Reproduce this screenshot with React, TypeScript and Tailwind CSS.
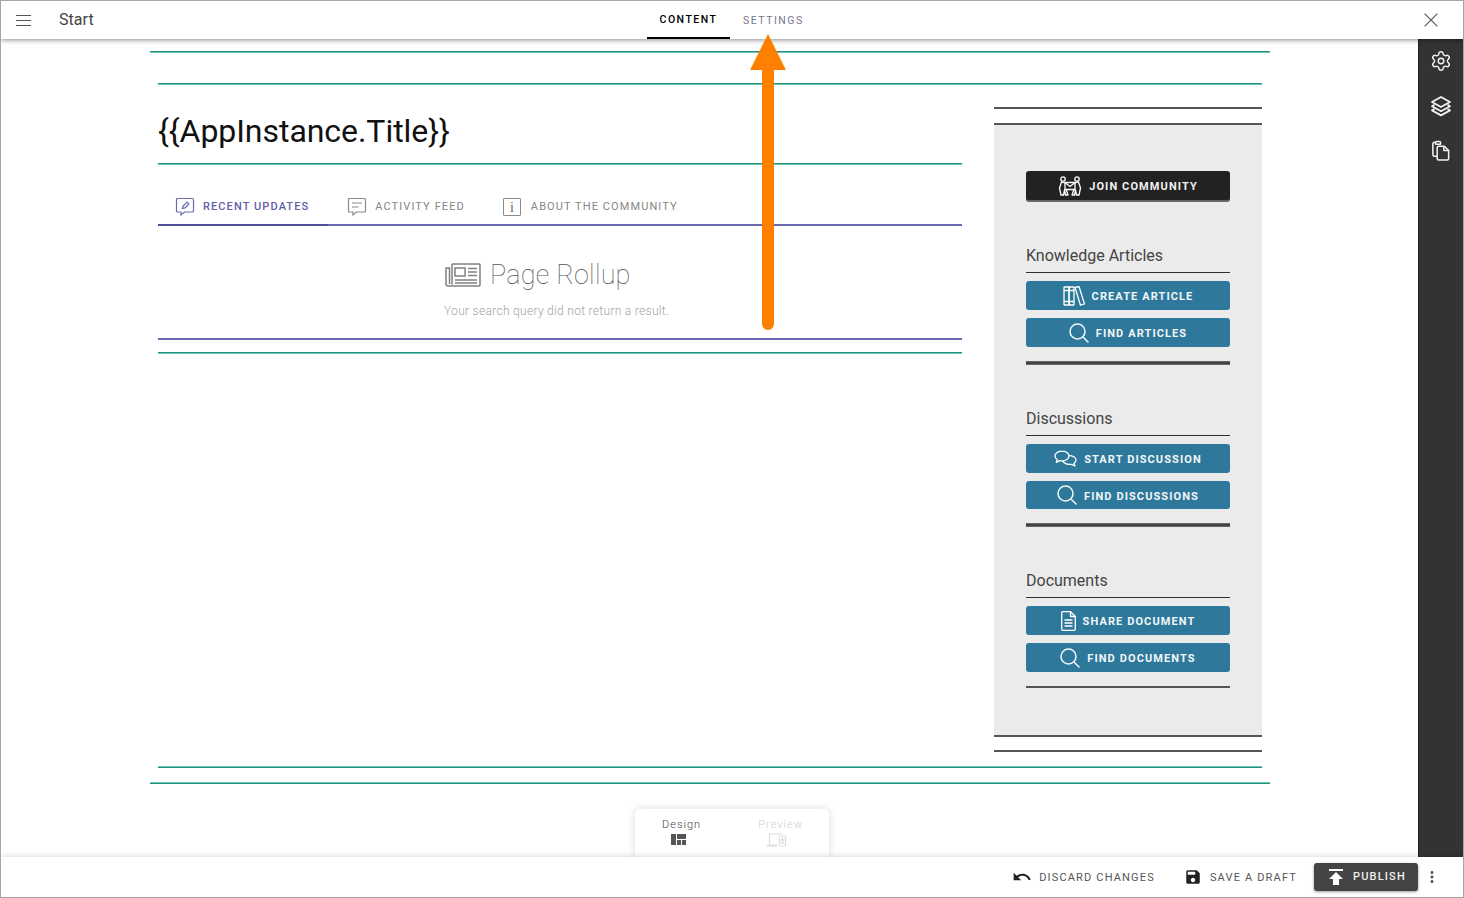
import { Settings, X } from "lucide-react";
import { MdMoreVert, MdPublish, MdSave, MdUndo } from "react-icons/md";
import type { ReactNode } from "react";

function GreenRule({ flip = false }: { flip?: boolean }) {
  return (
    <div
      className={
        flip
          ? "h-[2px] border-t border-b border-t-[#6cc4b1] border-b-[#1f917c]"
          : "h-[2px] border-t border-b border-t-[#1f917c] border-b-[#6cc4b1]"
      }
    />
  );
}

function BubbleEdit({ color }: { color: string }) {
  return (
    <svg width="20" height="20" viewBox="0 0 20 20" fill="none" stroke={color} strokeWidth="1.2">
      <path d="M2.500 1.500h15a1 1 0 0 1 1 1v11.500a1 1 0 0 1-1 1H9.500l-3.500 3v-3H2.500a1 1 0 0 1-1-1V2.500a1 1 0 0 1 1-1z" />
      <path d="M7.500 11.500l.6-2.400 4-4 1.800 1.800-4 4z" />
    </svg>
  );
}

function BubbleText({ color }: { color: string }) {
  return (
    <svg width="20" height="20" viewBox="0 0 20 20" fill="none" stroke={color} strokeWidth="1.2">
      <path d="M2.500 1.500h15a1 1 0 0 1 1 1v11.500a1 1 0 0 1-1 1H9.500l-3.500 3v-3H2.500a1 1 0 0 1-1-1V2.500a1 1 0 0 1 1-1z" />
      <path d="M5 6h10M5 10h6.500" />
    </svg>
  );
}

function NewsIcon() {
  return (
    <svg width="36" height="24" viewBox="0 0 36 24" fill="none" stroke="#808080" strokeWidth="1.5">
      <path d="M7 1h27a1 1 0 0 1 1 1v20a1 1 0 0 1-1 1H3a2 2 0 0 1-2-2V5h3.500v16" />
      <path d="M7 1v20.500" />
      <rect x="10" y="5" width="10" height="8" />
      <path d="M23 5.500h9M23 9h9M23 12.500h9M10 17h22M10 20h22" />
    </svg>
  );
}

function LayersIcon() {
  return (
    <svg width="22" height="22" viewBox="0 0 22 22" fill="none" stroke="#f2f2f2" strokeWidth="1.8" strokeLinejoin="round">
      <path d="M11 2l9 5-9 5-9-5z" />
      <path d="M4.500 9.800L2 11.200l9 5 9-5-2.500-1.400" />
      <path d="M4.500 14L2 15.400l9 5 9-5L17.500 14" />
    </svg>
  );
}

function PagesIcon() {
  return (
    <svg width="20" height="21" viewBox="0 0 20 22" fill="none" stroke="#f2f2f2" strokeWidth="1.6" strokeLinejoin="round">
      <path d="M6 17H3a1.500 1.500 0 0 1-1.500-1.500V4A1.500 1.500 0 0 1 3 2.500h1.500" />
      <path d="M4.500 4.500V2.500a1 1 0 0 1 1-1h3a1 1 0 0 1 1 1v2z" />
      <path d="M7.500 6.500h6l4.500 4.500v8.500a1.500 1.500 0 0 1-1.500 1.500H7.500A1.500 1.500 0 0 1 6 19.500V8a1.500 1.500 0 0 1 1.500-1.500z" />
      <path d="M13 6.500V11h5" />
    </svg>
  );
}

function JoinIcon() {
  return (
    <svg width="24" height="20" viewBox="0 0 24 20" fill="none" stroke="#fff" strokeWidth="1.300" strokeLinejoin="round">
      <circle cx="5" cy="3" r="2.200" />
      <circle cx="19" cy="3" r="2.200" />
      <rect x="7" y="6.500" width="10" height="7" />
      <path d="M7 6.500l5 4 5-4" />
      <path d="M7 7L3.500 6 1.500 12 3 19h2.500l1-5 1 5H10L8 13" />
      <path d="M17 7l3.500-1 2 6L21 19h-2.500l-1-5-1 5H14l2-6" />
    </svg>
  );
}

function BooksIcon() {
  return (
    <svg width="22" height="20" viewBox="0 0 22 20" fill="none" stroke="#fff" strokeWidth="1.300" strokeLinejoin="round">
      <rect x="1" y="1" width="5" height="18" rx="0.500" />
      <rect x="6" y="1" width="5" height="18" rx="0.500" />
      <path d="M1 4.500h10M1 15.500h10" />
      <path d="M12 1.500l4-1 5.500 17.500-4 1.200z" />
    </svg>
  );
}

function TalkIcon() {
  return (
    <svg width="23" height="17" viewBox="0 0 23 17" fill="none" stroke="#fff" strokeWidth="1.300" strokeLinejoin="round">
      <path d="M8 1C4.200 1 1 3.200 1 6c0 1.500.9 2.800 2.300 3.700L2.300 12.300l3.400-1.600c.7.200 1.500.3 2.300.3 3.800 0 7-2.200 7-5s-3.200-5-7-5z" />
      <path d="M15 5.500c3.600.2 7 1.900 7 4.500 0 1.400-.8 2.500-2 3.300l1 2.700-3.600-1.700c-3.400.6-7.400-.5-8.400-3" />
    </svg>
  );
}

function DocIcon() {
  return (
    <svg width="15" height="20" viewBox="0 0 15 20" fill="none" stroke="#fff" strokeWidth="1.300" strokeLinejoin="round">
      <path d="M2 .700h7.500l4.800 4.800V18a1.300 1.300 0 0 1-1.300 1.300H2A1.300 1.300 0 0 1 .700 18V2A1.300 1.300 0 0 1 2 .700z" />
      <path d="M9.500.700v4.800h4.800" />
      <path d="M3.500 9h8M3.500 12h8M3.500 15h8" />
    </svg>
  );
}

function SearchGlyph() {
  return (
    <svg width="20" height="20" viewBox="0 0 20 20" fill="none" stroke="#f2f6f8" strokeWidth="1.500">
      <circle cx="8.500" cy="8.500" r="7.500" />
      <path d="M14 14l5.500 5.500" />
    </svg>
  );
}

function LayoutGlyph() {
  return (
    <svg className="mr-[7px]" width="15" height="11" viewBox="0 0 15 11" fill="#555555">
      <rect x="0" y="0" width="5" height="11" />
      <rect x="6" y="0" width="9" height="5" />
      <rect x="6" y="6" width="4" height="5" />
      <rect x="11" y="6" width="4" height="5" />
    </svg>
  );
}

function DevicesIcon() {
  return (
    <svg className="mr-[8px]" width="20" height="14" viewBox="0 0 20 14" fill="none" stroke="#dcdcdc" strokeWidth="1.200">
      <path d="M2.500 11V1h12" />
      <path d="M0 12.500h10" strokeWidth="2" />
      <rect x="12.500" y="3" width="6" height="10" rx="1" />
      <rect x="14.500" y="5" width="2" height="6" fill="#dcdcdc" stroke="none" />
    </svg>
  );
}

function ActionButton({ icon, label, height = "h-[29px]" }: { icon: ReactNode; label: string; height?: string }) {
  return (
    <div className={`${height} flex items-center justify-center gap-[7px] rounded-[3px] bg-[#2e799b] text-[11px] font-bold tracking-[1.100px] text-[#f2f6f8]`}>
      {icon}
      <span className="pt-[4px]">{label}</span>
    </div>
  );
}

function SideSection({ title, ruleClass, children }: { title: string; ruleClass: string; children: ReactNode }) {
  return (
    <div className="mt-[41px]">
      <h3 className="h-[29px] pt-[1px] text-[16px] leading-[24px] text-[#444444]">{title}</h3>
      <div className="h-px bg-[#2c2f33]" />
      <div className="mt-[8px] flex flex-col gap-[8px]">{children}</div>
      <div className={ruleClass} />
    </div>
  );
}

export default function App() {
  return (
    <div className="relative flex h-[898px] w-[1464px] flex-col overflow-hidden border border-[#a6a6a6] bg-white font-['Roboto',sans-serif]">
      <header className="relative z-10 flex h-[38px] shrink-0 items-stretch bg-white shadow-[0_1px_5px_rgba(0,0,0,0.45)]">
        <div className="flex w-[646px] items-center pl-[15px]">
          <div className="flex w-[15px] flex-col gap-[4px]">
            <span className="h-px bg-[#555555]" />
            <span className="h-px bg-[#555555]" />
            <span className="h-px bg-[#555555]" />
          </div>
          <span className="ml-[28px] text-[16px] tracking-[0.050px] text-[#444444]">Start</span>
        </div>
        <div className="flex w-[83px] items-center justify-center border-b-2 border-black pt-[2px] text-[10.500px] font-medium tracking-[1.500px] text-black">
          CONTENT
        </div>
        <div className="flex items-center pl-[13px] pt-[1px] text-[10.500px] tracking-[1.500px] text-[#77778c]">SETTINGS</div>
        <div className="ml-auto flex items-center pr-[20px]">
          <X size={24} strokeWidth={1.1} color="#666666" />
        </div>
      </header>

      <div className="relative flex min-h-0 flex-1">
        <main className="relative min-w-0 flex-1 pl-[149px] pt-[12px]">
          <div className="w-[1120px]">
            <GreenRule />
            <div className="mt-[30px] px-[8px]">
              <GreenRule />
              <div className="flex justify-between">
                <div className="w-[804px]">
                  <div className="flex h-[78px] items-center pt-[14px] text-[32px] leading-[40px] tracking-[-0.050px] text-[#111111]">{"{{AppInstance.Title}}"}</div>
                  <GreenRule />
                  <nav className="flex h-[61px] items-stretch border-b-2 border-[#6a6aae] pt-[25px] text-[11px] tracking-[1.100px]">
                    <div className="-mb-[2px] flex items-center gap-[8px] border-b-2 border-[#4f5192] pl-[17px] pr-[19px] font-medium text-[#5f60a8]">
                      <BubbleEdit color="#6a6bb0" />
                      <span>RECENT UPDATES</span>
                    </div>
                    <div className="flex items-center gap-[8px] pl-[19px] pr-[19px] text-[#858585]">
                      <BubbleText color="#8a8a8a" />
                      <span>ACTIVITY FEED</span>
                    </div>
                    <div className="flex items-center gap-[10px] pl-[19px] text-[#858585]">
                      <div className="flex h-[18px] w-[18px] items-center justify-center rounded-[1px] border border-[#8a8a8a] font-['Liberation_Serif',serif] text-[14px] tracking-normal text-[#666666]">
                        i
                      </div>
                      <span>ABOUT THE COMMUNITY</span>
                    </div>
                  </nav>
                  <div className="h-[112px] pl-[287px] pt-[31px]">
                    <div className="flex h-[36px] items-center gap-[9px]">
                      <NewsIcon />
                      <span className="text-[27px] font-thin tracking-[0.200px] text-[#555555]">Page Rollup</span>
                    </div>
                    <p className="-ml-px mt-[9px] text-[12px] leading-[18px] font-light tracking-[0.300px] text-[#a3a3a3]">Your search query did not return a result.</p>
                  </div>
                  <div className="h-[2px] bg-[#6a6aae]" />
                  <div className="mt-[12px]">
                    <GreenRule />
                  </div>
                </div>

                <aside className="mt-[22px] w-[268px]">
                  <div className="h-[2px] bg-[#555555]" />
                  <div className="mt-[14px] h-[2px] bg-[#555555]" />
                  <div className="h-[610px] bg-[#ebebeb] px-[32px] pt-[46px]">
                    <div className="flex h-[31px] items-center justify-center gap-[7px] rounded-[3px] border-b-2 border-[#666666] bg-[#222222] text-[11px] font-bold tracking-[1.100px] text-[#f2f2f2]">
                      <JoinIcon />
                      <span className="pt-[4px]">JOIN COMMUNITY</span>
                    </div>
                    <SideSection title="Knowledge Articles" ruleClass="mt-[14px] h-[4px] border-t border-b border-[#666666] bg-[#444444]">
                      <ActionButton icon={<BooksIcon />} label="CREATE ARTICLE" />
                      <ActionButton icon={<SearchGlyph />} label="FIND ARTICLES" />
                    </SideSection>
                    <SideSection title="Discussions" ruleClass="mt-[14px] h-[4px] border-t border-b border-[#666666] bg-[#444444]">
                      <ActionButton icon={<TalkIcon />} label="START DISCUSSION" />
                      <ActionButton icon={<SearchGlyph />} label="FIND DISCUSSIONS" height="h-[28px]" />
                    </SideSection>
                    <SideSection title="Documents" ruleClass="mt-[14px] h-[2px] bg-[#555555]">
                      <ActionButton icon={<DocIcon />} label="SHARE DOCUMENT" />
                      <ActionButton icon={<SearchGlyph />} label="FIND DOCUMENTS" />
                    </SideSection>
                  </div>
                  <div className="h-[2px] bg-[#555555]" />
                  <div className="mt-[13px] h-[2px] bg-[#555555]" />
                </aside>
              </div>
              <div className="mt-[14px]">
                <GreenRule flip />
              </div>
            </div>
            <div className="mt-[14px]">
              <GreenRule flip />
            </div>
          </div>

          {/* view switcher tucked behind the footer */}
          <div className="absolute bottom-0 left-[634px] flex h-[48px] w-[194px] justify-between rounded-t-[5px] bg-white pl-[27px] pr-[26px] pt-[9px] shadow-[0_0_8px_rgba(0,0,0,0.14)]">
            <div className="flex flex-col items-center gap-[3px] text-[11px] leading-[13px] font-light tracking-[1px] text-[#444444]">
              <span>Design</span>
              <LayoutGlyph />
            </div>
            <div className="flex flex-col items-center gap-[2px] text-[11px] leading-[13px] font-light tracking-[1px] text-[#cfcfcf]">
              <span>Preview</span>
              <DevicesIcon />
            </div>
          </div>
        </main>

        <aside className="flex w-[45px] shrink-0 flex-col items-center gap-[23px] border-l border-[#1f1f1f] bg-[#333333] pt-[11px]">
          <Settings size={22} strokeWidth={1.6} color="#f2f2f2" />
          <LayersIcon />
          <PagesIcon />
        </aside>
      </div>

      <footer className="relative z-10 flex h-[40px] shrink-0 items-center justify-end bg-white pr-[22px] text-[11px] tracking-[1.170px] text-[#555555] shadow-[0_-1px_5px_rgba(0,0,0,0.15)]">
        <MdUndo size={20} color="#222222" />
        <span className="ml-[7px] pt-[2px]">DISCARD CHANGES</span>
        <MdSave size={18} color="#222222" className="ml-[29px]" />
        <span className="ml-[8px] pt-[2px]">SAVE A DRAFT</span>
        <div className="ml-[17px] flex h-[28px] w-[104px] items-center gap-[5px] rounded-[3px] bg-[#444444] pl-[10px] font-medium text-[#f0f0f0] shadow-[0_1px_3px_rgba(0,0,0,0.4)]">
          <MdPublish size={24} color="#ffffff" />
          <span>PUBLISH</span>
        </div>
        <MdMoreVert size={18} color="#555555" className="ml-[5px]" />
      </footer>

      {/* orange callout arrow drawn over the page */}
      <svg className="absolute left-[749px] top-[33px] z-20" width="36" height="296" viewBox="0 0 36 296">
        <path d="M18 0L36 36H24V290a6 6 0 0 1-12 0V36H0z" fill="#ff8000" />
      </svg>
    </div>
  );
}
